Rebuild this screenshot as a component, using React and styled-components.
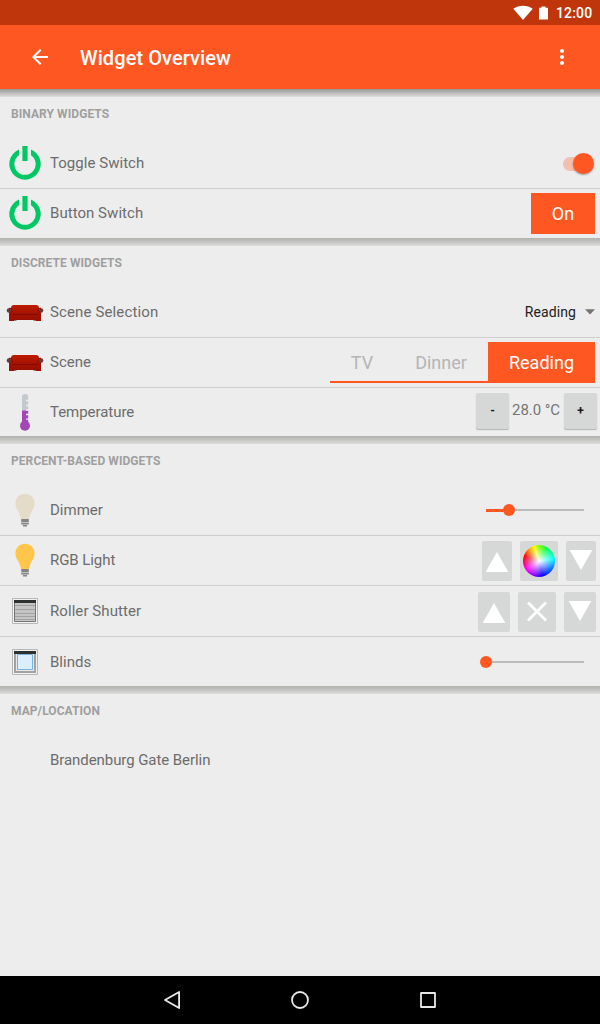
import React from "react";
import styled, { createGlobalStyle, css } from "styled-components";

const ACCENT = "#ff5722";

const GlobalStyle = createGlobalStyle`
  *, *::before, *::after { box-sizing: border-box; }
  html, body { margin: 0; padding: 0; }
  body { background: #ededed; font-family: Roboto, "Liberation Sans", sans-serif; }
  button { font-family: inherit; border: 0; padding: 0; margin: 0; }
  svg { display: block; flex: none; }
`;

const Screen = styled.div`
  width: 600px;
  height: 1024px;
  display: flex;
  flex-direction: column;
  background: #ededed;
  overflow: hidden;
`;

const StatusBar = styled.div`
  height: 25px;
  flex: none;
  display: flex;
  align-items: center;
  justify-content: flex-end;
  padding-right: 8px;
  background: #bf360c;
  color: #fff;
`;

const StatusIcons = styled.div`
  display: flex;
  align-items: center;
  gap: 6px;
`;

const Clock = styled.span`
  width: 36px;
  margin-left: 8px;
  font-size: 14px;
  font-weight: 500;
  letter-spacing: 0.15px;
  line-height: 25px;
  padding-top: 1px;
`;

const Toolbar = styled.header`
  height: 64px;
  flex: none;
  display: flex;
  align-items: center;
  padding: 0 26px 0 28px;
  background: ${ACCENT};
  color: #fff;
`;

const Title = styled.h1`
  flex: 1;
  margin: 0;
  padding: 2px 0 0 28px;
  font-size: 20px;
  line-height: 24px;
  letter-spacing: 0.08px;
  font-weight: 500;
`;

const Shadow = styled.div`
  height: 8px;
  flex: none;
  background: ${(p) =>
    p.$strong
      ? "linear-gradient(#979797, #b4b4b4 40%, #dedede)"
      : "linear-gradient(#b2b2af, #c4c4c2 45%, #dcdcda)"};
`;

const SectionTitle = styled.h2`
  height: 41px;
  margin: 0;
  padding: 9px 0 0 11px;
  font-size: 12px;
  line-height: 16px;
  letter-spacing: 0.07px;
  font-weight: 700;
  color: #9f9f9f;
`;

const Row = styled.div`
  height: ${(p) => p.$h}px;
  display: flex;
  align-items: center;
  border-bottom: ${(p) => (p.$line ? "1px solid #cecece" : "0")};
`;

const RowLead = styled.div`
  flex: 1;
  display: flex;
  align-items: center;
  padding-bottom: ${(p) => (p.$raised ? 1 : 0)}px;
`;

const IconSlot = styled.div`
  width: 50px;
  flex: none;
  display: flex;
  justify-content: center;
`;

const Label = styled.span`
  font-size: 15px;
  line-height: 20px;
  letter-spacing: ${(p) => p.$spacing || 0}px;
  color: #6c6c6c;
`;

const Controls = styled.div`
  display: flex;
  align-items: center;
  gap: ${(p) => p.$gap || 0}px;
  padding-right: ${(p) => p.$right}px;
  padding-top: ${(p) => p.$top || 0}px;
  padding-bottom: ${(p) => p.$bottom || 0}px;
`;

const SwitchTrack = styled.div`
  width: 31px;
  height: 14px;
  border-radius: 7px;
  display: flex;
  align-items: center;
  justify-content: flex-end;
  background: linear-gradient(90deg, #f3c0b0 24px, transparent 24px);
`;

const SwitchThumb = styled.div`
  width: 21px;
  height: 21px;
  flex: none;
  border-radius: 50%;
  background: ${ACCENT};
  box-shadow: 0 1px 2px rgba(0, 0, 0, 0.35);
`;

const Segments = styled.div`
  display: flex;
  height: 41px;
  border-bottom: 2px solid ${ACCENT};
`;

const Segment = styled.button`
  width: ${(p) => p.$w}px;
  height: 41px;
  font-size: 18px;
  line-height: 41px;
  background: transparent;
  color: #b5b5b5;
  ${(p) =>
    p.$active &&
    css`
      background: ${ACCENT};
      color: #fff;
    `}
`;

const Selected = styled.span`
  font-size: 14px;
  line-height: 20px;
  letter-spacing: 0.1px;
  color: #212121;
`;

const StepButton = styled.button`
  width: 33px;
  height: 36px;
  border-radius: 2px;
  background: #d6d8d7;
  color: #1c1c1c;
  font-size: 12px;
  font-weight: 700;
  line-height: 37px;
  box-shadow: 0 1px 1px rgba(0, 0, 0, 0.25);
`;

const Value = styled.span`
  width: 55px;
  padding: 0 1px 2px 0;
  font-size: 15px;
  line-height: 20px;
  letter-spacing: -0.05px;
  text-align: center;
  white-space: nowrap;
  color: #757575;
`;

const PadButton = styled.button`
  width: ${(p) => p.$w}px;
  height: 40px;
  display: flex;
  align-items: center;
  justify-content: center;
  overflow: hidden;
  border-radius: 2px;
  background: #d6d8d7;
`;

const ColorWheel = styled.div`
  width: 32px;
  height: 32px;
  border-radius: 50%;
  background: radial-gradient(circle closest-side, #fff, rgba(255, 255, 255, 0.5) 45%, rgba(255, 255, 255, 0) 95%),
    conic-gradient(from 0deg, #80ff00, #00ff40 30deg, #00ffff 82deg, #0080ff 115deg, #0000ff 165deg, #8000ff 195deg, #ff00ff 235deg, #ff0080 262deg, #ff0000 290deg, #ffa000 320deg, #ffff00 342deg, #80ff00 360deg);
`;

const SliderLine = styled.div`
  width: ${(p) => p.$w}px;
  height: ${(p) => (p.$filled ? 3 : 2)}px;
  background: ${(p) => (p.$filled ? ACCENT : "#bcbcbc")};
`;

const SliderThumb = styled.div`
  width: 12px;
  height: 12px;
  border-radius: 50%;
  background: ${ACCENT};
`;

const Spacer = styled.div`
  flex: 1;
`;

const NavBar = styled.nav`
  height: 48px;
  flex: none;
  display: flex;
  align-items: center;
  justify-content: center;
  gap: 104px;
  background: #000;
`;

const WifiIcon = () => (
  <svg width="20" height="16" viewBox="0 0 20 16">
    <path d="M0.3 3.7C5.8-.4 14.2-.4 19.7 3.7L10 15Z" fill="#fff" />
  </svg>
);

const BatteryIcon = () => (
  <svg width="9" height="14" viewBox="0 0 9 14">
    <path d="M2.5 0.5h4v1.3H9V13.5H0V1.8h2.5z" fill="#fff" />
  </svg>
);

const BackArrow = () => (
  <svg width="24" height="24" viewBox="0 0 24 24">
    <path d="M20 11H7.83l5.59-5.59L12 4l-8 8 8 8 1.41-1.41L7.83 13H20v-2z" fill="#fff" />
  </svg>
);

const MoreIcon = () => (
  <svg width="24" height="24" viewBox="0 0 24 24" fill="#fff">
    <circle cx="12" cy="6" r="2" />
    <circle cx="12" cy="12" r="2" />
    <circle cx="12" cy="18" r="2" />
  </svg>
);

const PowerIcon = () => (
  <svg width="34" height="36" viewBox="0 0 34 36" fill="#00c864">
    <path d="M11 4.5A15.7 15.7 0 1 0 23 4.5V10.2A10.7 10.7 0 1 1 11 10.2Z" />
    <path d="M14.4 1h5.2v15h-5.2z" />
  </svg>
);

const SofaIcon = () => (
  <svg width="38" height="18" viewBox="0 -1 38 18">
    <defs>
      <linearGradient id="sofa" x1="0" y1="0" x2="0" y2="1">
        <stop offset="0" stopColor="#bd1a00" />
        <stop offset="1" stopColor="#980f00" />
      </linearGradient>
    </defs>
    <path d="M8 15h2.500v1.500H8zM27.500 15H30v1.500h-2.500z" fill="#2a0500" />
    <path d="M3 7h5v10H3zM30 7h5v10h-5z" fill="#9c1000" />
    <path d="M5 11V4Q5 1 8 1h22q3 0 3 3v12H5z" fill="url(#sofa)" />
    <path d="M6 10.3h26" stroke="#7c0900" />
    <circle cx="2.9" cy="6.5" r="2.2" fill="#6b3a32" />
    <circle cx="35.1" cy="6.5" r="2.2" fill="#6b3a32" />
    <path d="M3 4.5Q6.3 4 6 8.5M35 4.5Q31.7 4 32 8.5" fill="none" stroke="#920e00" strokeWidth="1.3" />
  </svg>
);

const ThermometerIcon = () => (
  <svg width="12" height="38" viewBox="0 0 12 38">
    <path d="M3 18V4a3 3 0 0 1 6.2 0v14z" fill="#c3cacd" />
    <path d="M3 17.5h6.2V29H3z" fill="#a347b8" />
    <circle cx="6" cy="32.7" r="5" fill="#a347b8" />
    <path d="M7 7.5h3M7 12.5h3M7 17h3M7 21.5h3M7 26.2h3" stroke="#ededed" strokeWidth="1.3" />
  </svg>
);

const BulbIcon = ({ color }) => (
  <svg width="20" height="34" viewBox="0 0 20 34">
    <path d="M10 .8C4.5 .8 .4 5 .4 10.2c0 6.2 4.8 8.8 5.6 15.8h8c.8-7 5.6-9.6 5.6-15.8C19.6 5 15.5 .8 10 .8z" fill={color} />
    <path d="M6.2 26h7.6v3.4H6.2zM6.2 30h7.6v1.5H6.2zM8 32h4v1.4H8z" fill="#858585" />
    <path d="M6.2 29.1h7.6v.7H6.2z" fill="#c4c4c4" />
  </svg>
);

const ShutterIcon = () => (
  <svg width="26" height="26" viewBox="0 0 26 26">
    <path d="M.5.5h25v25H.5z" fill="#f2f2f2" stroke="#b7b7b7" />
    <path d="M2.5 3h21v20.5h-21z" fill="#c4c4c4" stroke="#777" />
    <path d="M3 7.5h20M3 11.5h20M3 15.5h20M3 18.5h20M3 21.5h20" stroke="#a2a2a2" />
    <path d="M2 2h22v3H2z" fill="#2c302e" />
  </svg>
);

const BlindsIcon = () => (
  <svg width="26" height="26" viewBox="0 0 26 26">
    <path d="M.5.5h25v25H.5z" fill="#f2f2f2" stroke="#b7b7b7" />
    <path d="M3 4v19h20V4" fill="#e6e6e6" stroke="#a2a2a2" strokeWidth="2" />
    <path d="M5.5 5.5h15v15h-15z" fill="#daeffd" stroke="#7ab4d8" />
    <path d="M2 2h22v3H2z" fill="#2c302e" />
  </svg>
);

const UpIcon = () => (
  <svg width="24" height="24" viewBox="0 0 24 24">
    <path d="M12 3L23.3 23H.7z" fill="#fff" />
  </svg>
);

const DownIcon = () => (
  <svg width="24" height="24" viewBox="0 0 24 24">
    <path d="M12 21L.7 1h22.6z" fill="#fff" />
  </svg>
);

const StopIcon = () => (
  <svg width="20" height="20" viewBox="0 0 20 20">
    <path d="M1 .5l18 18M19 .5l-18 18" stroke="#fff" strokeWidth="2.7" />
  </svg>
);

const CaretIcon = () => (
  <svg width="10" height="6" viewBox="0 0 10 6">
    <path d="M0 .2h10L5 5.5z" fill="#747474" />
  </svg>
);

const NavIcon = ({ children }) => (
  <svg width="24" height="24" viewBox="0 0 24 24" fill="none" stroke="#e8e8e8" strokeWidth="1.8" strokeLinejoin="round">
    {children}
  </svg>
);

function WidgetRow({ icon, label, spacing, height, line, raised, gap, top, bottom, right = 0, children }) {
  return (
    <Row $h={height} $line={line}>
      <RowLead $raised={raised}>
        <IconSlot>{icon}</IconSlot>
        <Label $spacing={spacing}>{label}</Label>
      </RowLead>
      <Controls $gap={gap} $right={right} $top={top} $bottom={bottom}>{children}</Controls>
    </Row>
  );
}

export default function App() {
  return (
    <Screen>
      <GlobalStyle />
      <StatusBar>
        <StatusIcons>
          <WifiIcon />
          <BatteryIcon />
        </StatusIcons>
        <Clock>12:00</Clock>
      </StatusBar>
      <Toolbar>
        <BackArrow />
        <Title>Widget Overview</Title>
        <MoreIcon />
      </Toolbar>
      <Shadow $strong />

      <SectionTitle>BINARY WIDGETS</SectionTitle>
      <WidgetRow icon={<PowerIcon />} label="Toggle Switch" spacing={0.04} height={51} line right={6} top={1}>
        <SwitchTrack>
          <SwitchThumb />
        </SwitchTrack>
      </WidgetRow>
      <WidgetRow icon={<PowerIcon />} label="Button Switch" spacing={0.04} height={49} raised right={5}>
        <Segment $active $w={64}>On</Segment>
      </WidgetRow>
      <Shadow />

      <SectionTitle>DISCRETE WIDGETS</SectionTitle>
      <WidgetRow icon={<SofaIcon />} label="Scene Selection" spacing={0.13} height={51} line gap={9} right={5}>
        <Selected>Reading</Selected>
        <CaretIcon />
      </WidgetRow>
      <WidgetRow icon={<SofaIcon />} label="Scene" height={50} line raised right={5}>
        <Segments>
          <Segment $w={64}>TV</Segment>
          <Segment $w={94}>Dinner</Segment>
          <Segment $active $w={107}>Reading</Segment>
        </Segments>
      </WidgetRow>
      <WidgetRow icon={<ThermometerIcon />} label="Temperature" spacing={-0.05} height={48} right={3} bottom={2}>
        <StepButton>-</StepButton>
        <Value>28.0 °C</Value>
        <StepButton>+</StepButton>
      </WidgetRow>
      <Shadow />

      <SectionTitle>PERCENT-BASED WIDGETS</SectionTitle>
      <WidgetRow icon={<BulbIcon color="#e4dcc8" />} label="Dimmer" height={51} line right={16}>
        <SliderLine $w={17} $filled />
        <SliderThumb />
        <SliderLine $w={69} />
      </WidgetRow>
      <WidgetRow icon={<BulbIcon color="#ffc64b" />} label="RGB Light" spacing={-0.07} height={50} line raised gap={8} right={4} top={1}>
        <PadButton $w={30}><UpIcon /></PadButton>
        <PadButton $w={38}><ColorWheel /></PadButton>
        <PadButton $w={30}><DownIcon /></PadButton>
      </WidgetRow>
      <WidgetRow icon={<ShutterIcon />} label="Roller Shutter" spacing={0.07} height={51} line gap={8} right={4} top={2}>
        <PadButton $w={32}><UpIcon /></PadButton>
        <PadButton $w={38}><StopIcon /></PadButton>
        <PadButton $w={32}><DownIcon /></PadButton>
      </WidgetRow>
      <WidgetRow icon={<BlindsIcon />} label="Blinds" height={49} right={16}>
        <SliderThumb />
        <SliderLine $w={92} />
      </WidgetRow>
      <Shadow />

      <SectionTitle>MAP/LOCATION</SectionTitle>
      <WidgetRow label="Brandenburg Gate Berlin" spacing={-0.07} height={50} />
      <Spacer />
      <NavBar>
        <NavIcon><path d="M19.1 4v16L5 12z" /></NavIcon>
        <NavIcon><circle cx="12" cy="12" r="8" /></NavIcon>
        <NavIcon><path d="M5 5h14v14H5z" /></NavIcon>
      </NavBar>
    </Screen>
  );
}
